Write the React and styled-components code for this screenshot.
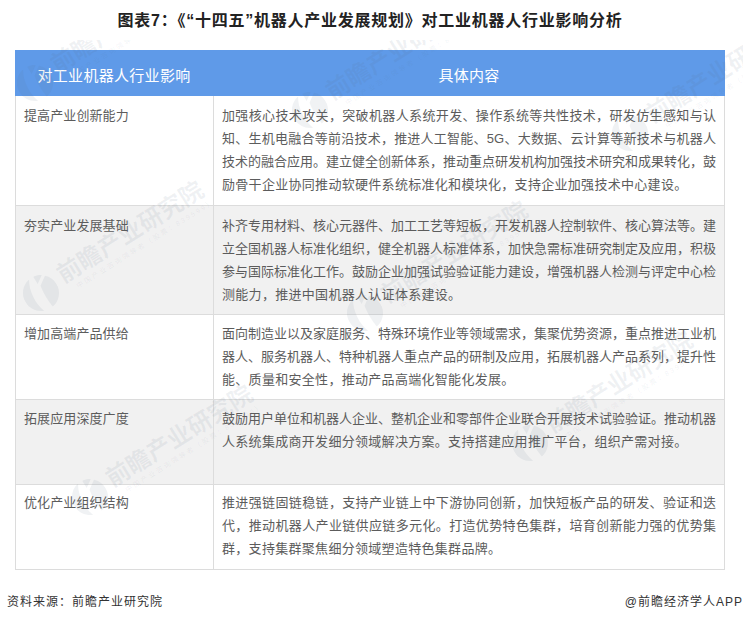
import React from "react";
import styled, { createGlobalStyle } from "styled-components";

const GlobalStyle = createGlobalStyle`
	html, body {
		margin: 0;
		padding: 0;
		background: #fff;
	}
`;

const Page = styled.div`
	position: relative;
	width: 743px;
	height: 622px;
	overflow: hidden;
	padding: 10px 18px 0 15px;
	box-sizing: border-box;
	font-family: "Liberation Sans", "Noto Sans CJK SC", sans-serif;
`;

const Title = styled.h1`
	margin: 0;
	height: 40px;
	line-height: 22px;
	font-size: 16px;
	font-weight: 700;
	letter-spacing: 0.75px;
	color: #222;
	text-align: center;
`;

const Table = styled.div`
	display: grid;
	grid-template-columns: 197px 1fr;
	width: 710px;
	border: solid #dcdcdc;
	border-width: 0 1px 1px 1px;
	box-sizing: border-box;
`;

const HeadCell = styled.div`
	height: 46px;
	margin: ${(props) => (props.$first ? "0 0 0 -1px" : "0 -1px 0 0")};
	padding-top: 2px;
	box-sizing: border-box;
	display: flex;
	align-items: center;
	justify-content: center;
	background: #5f9ae8;
	color: #fff;
	font-size: 15px;
	letter-spacing: 0.3px;
`;

const Cell = styled.div`
	height: ${(props) => props.$height}px;
	padding: ${(props) => props.$pad}px 8px 0 8px;
	box-sizing: border-box;
	background: ${(props) => (props.$shaded ? "#f1f1f1" : "transparent")};
	border-top: ${(props) => (props.$top ? "1px solid #dcdcdc" : "none")};
	border-left: ${(props) => (props.$side ? "1px solid #dcdcdc" : "none")};
	color: #5c5c5c;
	font-size: 13px;
	line-height: 23px;
	letter-spacing: 0.1px;
`;

const Line = styled.div`
	white-space: nowrap;
	text-align: justify;
	text-align-last: ${(props) => (props.$last ? "left" : "justify")};
	letter-spacing: ${(props) => (props.$last ? "0.3px" : "0")};
`;

const Footer = styled.div`
	display: flex;
	justify-content: space-between;
	margin: 21px -18px 0 -8px;
	color: #333;
	font-size: 12px;
	line-height: 22px;
	letter-spacing: 1px;
`;

const MarkLayer = styled.div`
	position: absolute;
	left: 0;
	right: 0;
	top: 40px;
	height: 530px;
	overflow: hidden;
	pointer-events: none;
`;

const Mark = styled.div`
	position: absolute;
	left: ${(props) => props.$x - 18}px;
	top: ${(props) => props.$y - 58}px;
	display: flex;
	align-items: center;
	gap: 6px;
	transform: rotate(-32deg);
	transform-origin: 18px 18px;
	white-space: nowrap;
	color: rgba(90, 110, 130, 0.09);
	font-size: 24px;
	line-height: 27px;
	font-weight: 700;
`;

const MarkSmall = styled.div`
	margin-left: 10px;
	font-size: 7px;
	line-height: 9px;
	font-weight: 400;
	letter-spacing: 2px;
`;

const MarkLogo = () => (
	<svg width="36" height="36" viewBox="0 0 36 36">
		<path fill="currentColor" d="M15 .3C6.500 1.600 0 9 0 18c0 7.500 4.600 13.900 11.200 16.700C7.500 25 8.500 10 15 .3z" />
		<path fill="currentColor" d="M20 .2c3 .4 5.800 1.400 8.100 3L20 8.500z" />
		<path fill="currentColor" d="M21.500 11.500 30.500 5.500C33.900 8.800 36 13.200 36 18c0 9-6.600 16.500-15.200 17.800C19.800 27 20 19 21.500 11.500z" />
	</svg>
);

// logo centres, read off the reference
const marks = [
	[35, 83],
	[310, 110],
	[630, 133],
	[41, 293],
	[365, 313],
	[530, 443],
	[90, 497],
];

const rows = [
	{
		name: "提高产业创新能力",
		height: 109,
		pad: 8,
		lines: [
			"加强核心技术攻关，突破机器人系统开发、操作系统等共性技术，研发仿生感知与认",
			"知、生机电融合等前沿技术，推进人工智能、5G、大数据、云计算等新技术与机器人",
			"技术的融合应用。建立健全创新体系，推动重点研发机构加强技术研究和成果转化，鼓",
			"励骨干企业协同推动软硬件系统标准化和模块化，支持企业加强技术中心建设。",
		],
	},
	{
		name: "夯实产业发展基础",
		height: 109,
		pad: 8,
		lines: [
			"补齐专用材料、核心元器件、加工工艺等短板，开发机器人控制软件、核心算法等。建",
			"立全国机器人标准化组织，健全机器人标准体系，加快急需标准研究制定及应用，积极",
			"参与国际标准化工作。鼓励企业加强试验验证能力建设，增强机器人检测与评定中心检",
			"测能力，推进中国机器人认证体系建设。",
		],
	},
	{
		name: "增加高端产品供给",
		height: 85,
		pad: 7,
		lines: [
			"面向制造业以及家庭服务、特殊环境作业等领域需求，集聚优势资源，重点推进工业机",
			"器人、服务机器人、特种机器人重点产品的研制及应用，拓展机器人产品系列，提升性",
			"能、质量和安全性，推动产品高端化智能化发展。",
		],
	},
	{
		name: "拓展应用深度广度",
		height: 85,
		pad: 7,
		lines: [
			"鼓励用户单位和机器人企业、整机企业和零部件企业联合开展技术试验验证。推动机器",
			"人系统集成商开发细分领域解决方案。支持搭建应用推广平台，组织产需对接。",
		],
	},
	{
		name: "优化产业组织结构",
		height: 85,
		pad: 6,
		lines: [
			"推进强链固链稳链，支持产业链上中下游协同创新，加快短板产品的研发、验证和迭",
			"代，推动机器人产业链供应链多元化。打造优势特色集群，培育创新能力强的优势集",
			"群，支持集群聚焦细分领域塑造特色集群品牌。",
		],
	},
];

const App = () => {
	return (
		<Page>
			<GlobalStyle />
			<Title>图表7：《“十四五”机器人产业发展规划》对工业机器人行业影响分析</Title>
			<Table>
				<HeadCell $first>对工业机器人行业影响</HeadCell>
				<HeadCell>具体内容</HeadCell>
				{rows.map((row, i) => (
					<React.Fragment key={row.name}>
						<Cell $height={row.height} $pad={row.pad} $shaded={i % 2 === 1} $top={i > 0}>
							{row.name}
						</Cell>
						<Cell $height={row.height} $pad={row.pad} $shaded={i % 2 === 1} $top={i > 0} $side>
							{row.lines.map((line, n) => (
								<Line key={n} $last={n === row.lines.length - 1}>
									{line}
								</Line>
							))}
						</Cell>
					</React.Fragment>
				))}
			</Table>
			<Footer>
				<span>资料来源：前瞻产业研究院</span>
				<span>@前瞻经济学人APP</span>
			</Footer>
			<MarkLayer>
				{marks.map(([x, y]) => (
					<Mark key={x} $x={x} $y={y}>
						<MarkLogo />
						<div>
							前瞻产业研究院
							<MarkSmall>中国产业咨询领导者（股票：839599）</MarkSmall>
						</div>
					</Mark>
				))}
			</MarkLayer>
		</Page>
	);
};

export default App;
